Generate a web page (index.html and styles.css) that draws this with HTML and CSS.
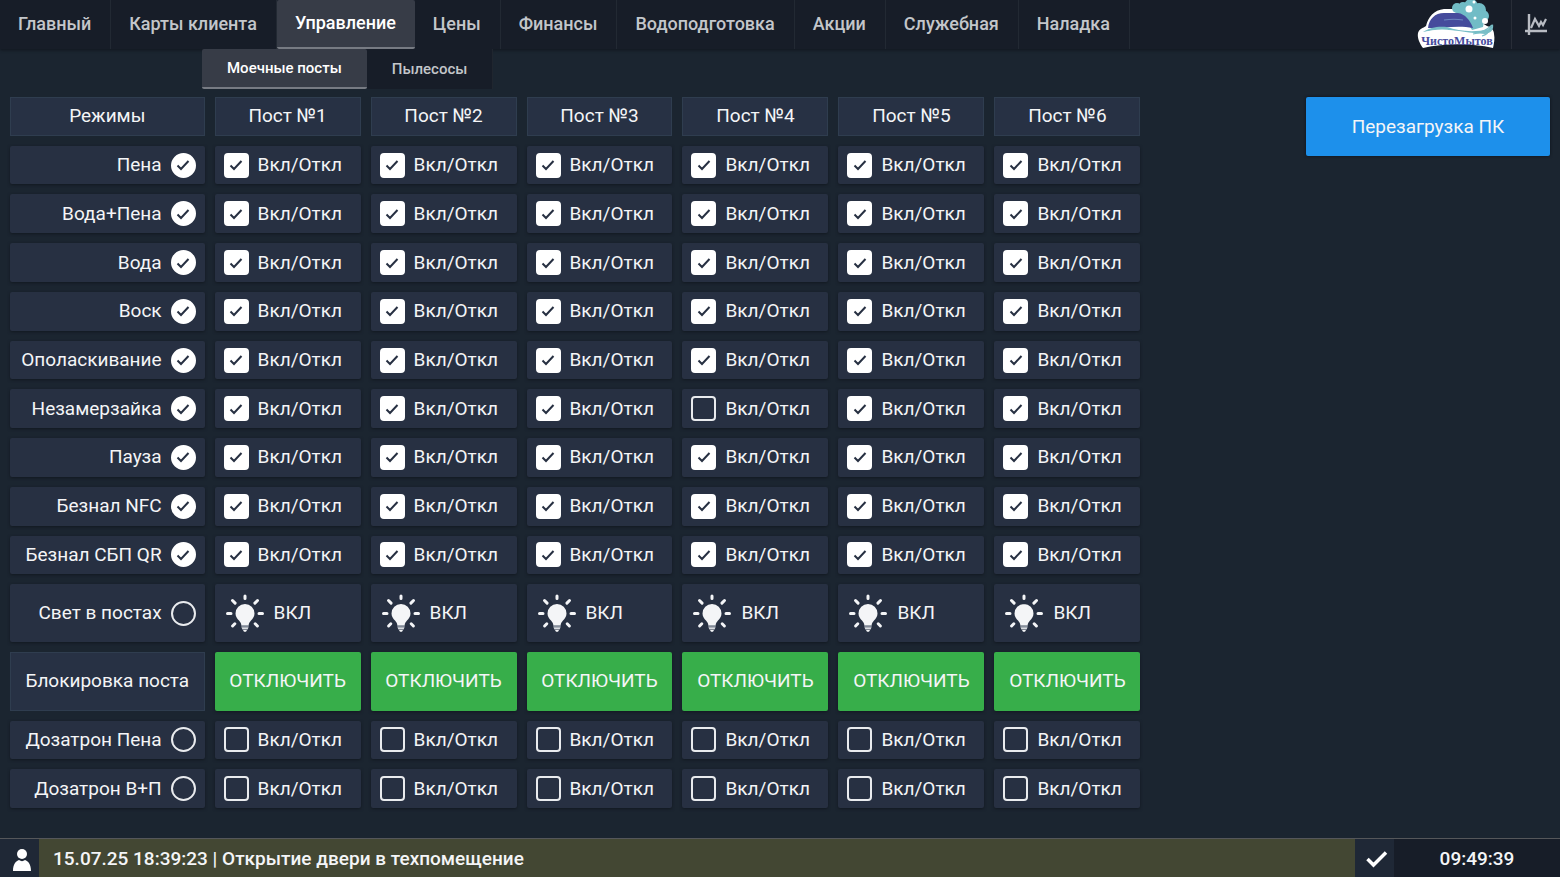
FILE: index.html
```html
<!DOCTYPE html>
<html lang="ru">
<head>
<meta charset="utf-8">
<meta name="viewport" content="width=device-width, initial-scale=1">
<title>Управление</title>
<link rel="stylesheet" href="styles.css">
</head>
<body>
<svg class="sprite" aria-hidden="true">
  <symbol id="bulb" viewBox="0 0 38 38">
    <g fill="none" stroke="currentColor" stroke-width="3" stroke-linecap="round">
      <path d="M19 2v2.500M6.500 6.500l2.600 2.600M31.500 6.500l-2.600 2.600M1.500 19.500h3.500M33 19.500h3.500M8.800 29.800l-2.200 2.200M29.200 29.800l2.200 2.200"/>
    </g>
    <path fill="currentColor" d="M19 10a9.500 9.500 0 0 0-9.500 9.500c0 3.400 1.900 5.200 3.500 7.100 1.400 1.600 2.200 3 2.400 4.900h7.200c.2-1.900 1-3.300 2.400-4.900 1.600-1.900 3.500-3.700 3.500-7.100a9.500 9.500 0 0 0-9.500-9.500z"/>
    <path fill="#a9b0bc" d="M15.300 31.500h7.400v1.200h-7.400z"/>
    <path fill="#d9dce2" d="M15.400 33.300h7.200l-1 2.200h-5.200z"/>
    <path fill="currentColor" d="M17 36h4l-1 1.800h-2z"/>
  </symbol>
</svg>

<header class="topbar">
  <nav class="menu" aria-label="Разделы">
    <a class="menu-item" href="#">Главный</a>
    <a class="menu-item" href="#">Карты клиента</a>
    <a class="menu-item active" href="#" aria-current="page">Управление</a>
    <a class="menu-item" href="#">Цены</a>
    <a class="menu-item" href="#">Финансы</a>
    <a class="menu-item" href="#">Водоподготовка</a>
    <a class="menu-item" href="#">Акции</a>
    <a class="menu-item" href="#">Служебная</a>
    <a class="menu-item" href="#">Наладка</a>
  </nav>
  <svg class="logo" viewBox="0 0 80 50" role="img" aria-label="ЧистоМытов">
    <path fill="#fff" d="M6 48C3 44 0 38 1 33c1-4 5-5 8-7 2-9 8-16 18-17h14c5 1 8 3 11 6l18 11c4 1 7 4 7 8 1 5 0 9-1 14-22-5-48-5-70 0z"/>
    <g fill="#71bcc6">
      <circle cx="40" cy="8" r="5"/><circle cx="46" cy="6" r="4"/><circle cx="54" cy="6" r="7"/><circle cx="62" cy="10" r="7"/><circle cx="66" cy="16" r="6"/><circle cx="60" cy="19" r="8"/>
      <path d="M37 10l21-5 10 10-2 12-11 3-8-13-9-5z"/>
    </g>
    <path fill="#454b9c" d="M11 28c1-9 7-15 16-15h14c7 1 12 7 15 15-14-3-29 0-45 0z"/>
    <path fill="none" stroke="#6c86c0" stroke-width="1.200" d="M27 20c7-1 13-1 19 0"/>
    <path fill="#78bec7" d="M6 32c7-5 16-6 24-5 12 4 26 6 42 2l4-5c1 6-2 9-8 10-21-1-36-7-62-2z"/>
    <path fill="#fff" d="M6 33c14-5 27-4 38 0 9 3 19 3 28 0-2 4-8 5-14 5H8z"/>
    <path fill="none" stroke="#78bec7" stroke-width="1.200" d="M56 34c8-1 14-4 19-9M65 36c4-1 7-4 8-8"/>
    <g fill="#fff"><circle cx="52" cy="9" r="3.500"/><circle cx="57" cy="2" r="1.500"/><circle cx="58" cy="18" r="1.500"/><circle cx="68" cy="21" r="3"/></g>
    <text class="logo-text" x="40" y="45" text-anchor="middle">ЧистоМытов</text>
  </svg>
  <button class="chart-button" type="button" aria-label="Графики">
    <svg class="chart-icon" viewBox="0 0 24 22" fill="none" stroke="currentColor" aria-hidden="true">
      <path stroke-width="2.400" d="M5 0v21M1 17h22"/>
      <path stroke-width="2.200" d="M7 14l4-9 4 7 2-4 2 3 3-6"/>
    </svg>
  </button>
</header>

<nav class="submenu" aria-label="Подразделы">
  <a class="submenu-item active" href="#" aria-current="page">Моечные посты</a>
  <a class="submenu-item" href="#">Пылесосы</a>
</nav>

<main class="content">
  <table class="posts">
    <thead><tr id="posts-head"></tr></thead>
    <tbody id="posts-body"></tbody>
  </table>
  <button class="reboot" type="button">Перезагрузка ПК</button>
</main>

<footer class="statusbar">
  <button class="status-button" type="button" aria-label="Пользователь">
    <svg class="user-icon" viewBox="0 0 20 24" fill="currentColor" aria-hidden="true">
      <circle cx="10" cy="6" r="5"/>
      <path d="M1 23c0-7 3-10 6-11 2 1.500 4 1.500 6 0 3 1 6 4 6 11z"/>
    </svg>
  </button>
  <p class="message">15.07.25 18:39:23 | Открытие двери в техпомещение</p>
  <button class="status-button" type="button" aria-label="Подтвердить">
    <svg class="tick-icon" viewBox="0 0 24 18" fill="none" stroke="currentColor" stroke-width="3.500" aria-hidden="true">
      <path d="M2.500 9l6 6L21 2.500"/>
    </svg>
  </button>
  <time class="clock">09:49:39</time>
</footer>
<script src="app.js"></script>
</body>
</html>
```
FILE: styles.css
```css
* {
  box-sizing: border-box;
}

body {
  display: flex;
  flex-direction: column;
  min-height: 100vh;
  margin: 0;
  background: #1b2530;
  color: #f4f5f7;
  font: 400 19px/24px Roboto, "Noto Sans", sans-serif;
}

button {
  border: 0;
  padding: 0;
  color: inherit;
  font: inherit;
  cursor: pointer;
}

a {
  color: inherit;
  text-decoration: none;
}

.sprite {
  display: none;
}

.topbar {
  display: flex;
  height: 49px;
  background: #171d28;
  box-shadow: 0 1px 3px #10151d;
}

.menu {
  display: flex;
  flex: 1;
}

.menu-item {
  display: flex;
  align-items: center;
  padding: 0 19px 1px 18px;
  border-right: 1px solid #222933;
  color: #c3c6ca;
  font-size: 18px;
  font-weight: 500;
}

.menu-item.active,
.submenu-item.active {
  border-right: 0;
  border-bottom: 2px solid #777b83;
  border-radius: 2px;
  background: #373c47;
  color: #fff;
}

.logo {
  width: 80px;
  height: 50px;
  margin-right: 14px;
}

.logo-text {
  fill: #454b9c;
  font: bold 12px "Liberation Serif", serif;
}

.chart-button {
  display: flex;
  align-items: center;
  justify-content: center;
  width: 49px;
  border-left: 1px solid #282d37;
  background: none;
  color: #b9bcc3;
}

.chart-icon {
  width: 24px;
  height: 22px;
}

.submenu {
  display: flex;
  height: 40px;
  margin-left: 202px;
}

.submenu-item {
  display: flex;
  align-items: center;
  padding: 0 25px;
  border-right: 1px solid #20262f;
  background: #171d28;
  color: #c3c6ca;
  font-size: 15px;
  font-weight: 500;
}

.content {
  display: flex;
  flex: 1;
  align-items: stretch;
  padding: 8px 10px 30px;
}

.posts {
  display: grid;
  grid-template-columns: 4fr repeat(6, 3fr);
  grid-template-rows: repeat(10, minmax(min-content, 2fr)) repeat(2, minmax(min-content, 3fr)) repeat(2, minmax(min-content, 2fr));
  gap: 10px;
  width: 73.400%;
}

.posts thead,
.posts tbody,
.posts tr {
  display: contents;
}

.posts th,
.posts td {
  display: flex;
  align-items: center;
  min-width: 0;
  padding: 0;
  border-radius: 2px;
  background: #273042;
  box-shadow: 0 1px 3px #121820;
  font-weight: 400;
  white-space: nowrap;
}

.posts .heading {
  justify-content: center;
  border: 1px solid #2f3d4f;
  border-radius: 0;
  background: #273144;
  box-shadow: none;
}

.toggle {
  display: flex;
  align-items: center;
  gap: 9px;
  padding: 0 9px;
}

.toggle.row {
  flex: 1;
  justify-content: flex-end;
}

.check {
  appearance: none;
  width: 25px;
  height: 25px;
  margin: 0;
  border: 2px solid #e9ebee;
  border-radius: 4px;
}

.check.round {
  border-radius: 50%;
}

.check:checked {
  border-color: #fff;
  background: #fff url("data:image/svg+xml,%3Csvg xmlns='http://www.w3.org/2000/svg' viewBox='0 0 20 20'%3E%3Cpath d='M4.500 10.500l3.500 3.500 7.500-8' fill='none' stroke='%23273042' stroke-width='2'/%3E%3C/svg%3E") center / 20px 20px no-repeat;
}

.light {
  display: flex;
  flex: 1;
  align-items: center;
  gap: 10px;
  padding: 0 11px;
  background: none;
}

.bulb {
  width: 38px;
  height: 38px;
}

.posts .power-cell {
  background: #37ae4a;
}

.power {
  flex: 1;
  align-self: stretch;
  background: none;
}

.reboot {
  width: 244px;
  height: 59px;
  margin-left: auto;
  border-radius: 2px;
  background: #1d90eb;
  box-shadow: 0 0 3px #0c1117;
}

.statusbar {
  display: flex;
  height: 39px;
  border-top: 1px solid #55575a;
  background: #434733;
}

.status-button {
  display: flex;
  align-items: center;
  justify-content: center;
  width: 39px;
  background: #1f2836;
  color: #fff;
}

.user-icon {
  width: 20px;
  height: 24px;
  margin: 4px 0 0 4px;
}

.tick-icon {
  width: 24px;
  height: 18px;
  margin: 2px 0 0 4px;
}

.message {
  flex: 1;
  align-self: center;
  margin: 0;
  padding: 2px 14px 0;
  font-weight: 500;
}

.clock {
  width: 166px;
  padding-top: 8px;
  background: #171d28;
  font-weight: 500;
  text-align: center;
}
```
FILE: app.js
```js
const POSTS = [1, 2, 3, 4, 5, 6];

const MODES = [
  { name: "Пена", on: true },
  { name: "Вода+Пена", on: true },
  { name: "Вода", on: true },
  { name: "Воск", on: true },
  { name: "Ополаскивание", on: true },
  { name: "Незамерзайка", on: true, except: 4 },
  { name: "Пауза", on: true },
  { name: "Безнал NFC", on: true },
  { name: "Безнал СБП QR", on: true },
  { name: "Свет в постах", kind: "light" },
  { name: "Блокировка поста", kind: "lock" },
  { name: "Дозатрон Пена" },
  { name: "Дозатрон В+П" }
];

function postCell(mode, row, post) {
  if (mode.kind === "light") {
    return `<td><button class="light" type="button"><svg class="bulb" aria-hidden="true"><use href="#bulb"/></svg>ВКЛ</button></td>`;
  }
  if (mode.kind === "lock") {
    return `<td class="power-cell"><button class="power" type="button">ОТКЛЮЧИТЬ</button></td>`;
  }
  const id = `mode-${row}-post-${post}`;
  const checked = mode.on && mode.except !== post ? "checked" : "";
  return `<td><label class="toggle" for="${id}"><input class="check" type="checkbox" id="${id}" ${checked}>Вкл/Откл</label></td>`;
}

function modeHeading(mode, row) {
  if (mode.kind === "lock") {
    return `<th class="heading" scope="row">${mode.name}</th>`;
  }
  const id = `mode-${row}`;
  return `<th scope="row"><label class="toggle row" for="${id}">${mode.name}<input class="check round" type="checkbox" id="${id}" ${mode.on ? "checked" : ""}></label></th>`;
}

document.getElementById("posts-head").innerHTML =
  `<th class="heading" scope="col">Режимы</th>` +
  POSTS.map(post => `<th class="heading" scope="col">Пост №${post}</th>`).join("");

document.getElementById("posts-body").innerHTML = MODES.map((mode, row) =>
  `<tr>${modeHeading(mode, row)}${POSTS.map(post => postCell(mode, row, post)).join("")}</tr>`
).join("");
```
